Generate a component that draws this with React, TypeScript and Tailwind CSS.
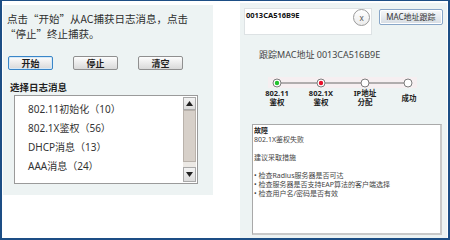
import React from "react";

function Btn({ children, focused }: { children: React.ReactNode; focused?: boolean }) {
  return (
    <div
      className={
        "w-[45px] h-[14px] rounded-[2px] border bg-linear-to-b from-[#fdfdfd] to-[#d9d9d9] flex items-center justify-center text-[9px] leading-none font-bold text-[#1e1e1e] " +
        (focused ? "border-[#3a86c8] shadow-[inset_0_0_0_1px_#d7e9f7]" : "border-[#8f8f8f]")
      }
    >
      {children}
    </div>
  );
}

function Arrow({ up }: { up?: boolean }) {
  return (
    <div className="h-full w-full bg-linear-to-b from-[#f3f3f3] to-[#dcdcdc] border border-[#a9a9a9] flex items-center justify-center">
      <svg width="7" height="5" viewBox="0 0 7 5">
        {up ? <polygon points="0,5 7,5 3.5,0" fill="#222" /> : <polygon points="0,0 7,0 3.5,5" fill="#222" />}
      </svg>
    </div>
  );
}

export default function App() {
  const items = ["802.11初始化（10）", "802.1X鉴权（56）", "DHCP消息（13）", "AAA消息（24）"];
  const labels: string[][] = [["802.11", "鉴权"], ["802.1X", "鉴权"], ["IP地址", "分配"], ["成功"]];
  return (
    <div className="w-[450px] h-[240px] bg-white border-t border-l-2 border-r-2 border-b-2 border-[#1d4e85] flex font-['Noto_Sans','Noto_Sans_CJK_SC',sans-serif]">
      {/* Left panel */}
      <div className="ml-[1px] mt-[4px] w-[210px] h-[190px] bg-[#edf3f3] flex flex-col">
        <div className="pl-[4px] pt-[6px] text-[10.5px] leading-[15px] text-[#2e2e2e] font-['Noto_Sans_CJK_SC',sans-serif]">
          <div className="whitespace-nowrap">点击“开始”从AC捕获日志消息，点击</div>
          <div className="whitespace-nowrap -ml-[2px]">“停止”终止捕获。</div>
        </div>
        <div className="flex pl-[5px] mt-[15px] gap-[20px]">
          <Btn focused>开始</Btn>
          <Btn>停止</Btn>
          <Btn>清空</Btn>
        </div>
        <div className="mt-[12px] pl-[7px] text-[9.5px] leading-[12px] font-bold text-[#222]">选择日志消息</div>
        <div className="ml-[11px] mt-[1px] w-[184px] h-[89px] border border-[#9a9a9a] bg-white flex">
          <div className="flex-1 pl-[13px] pt-[4px] text-[10px] leading-[19px] text-[#333]">
            {items.map((t) => (
              <div key={t} className="whitespace-nowrap">{t}</div>
            ))}
          </div>
          <div className="w-[13px] flex flex-col py-[1px] mr-[1px]">
            <div className="h-[13px]"><Arrow up /></div>
            <div className="h-[52px] bg-[#d7d0c9] border border-[#b9b2ab]" />
            <div className="flex-1 bg-[#ece9e5]" />
            <div className="h-[15px]"><Arrow /></div>
          </div>
        </div>
      </div>

      {/* Right panel */}
      <div className="ml-[27px] mt-[2px] w-[207px] h-[235px] bg-[#edf3f3] flex flex-col">
        <div className="flex items-start pt-[5px] pl-[4px]">
          <div className="w-[128px] h-[27px] bg-white border border-[#dde2e4] flex items-start">
            <div className="flex-1 pl-[1px] pt-[2px] text-[7.5px] leading-[9px] font-bold text-[#111]">0013CA516B9E</div>
            <div className="mr-[1px] w-[17px] h-[17px] rounded-full border border-[#9a9a9a] bg-linear-to-b from-white to-[#ececec] flex items-center justify-center text-[8px] leading-none text-[#555]">x</div>
          </div>
          <div className="ml-[7px] mt-[1px] w-[64px] h-[16px] rounded-[2px] border border-[#88a6c8] bg-linear-to-b from-[#f7f9fb] to-[#d6dce3] shadow-[inset_0_0_0_1px_#ffffff] flex items-center justify-center text-[8px] leading-none text-[#333]">
            MAC地址跟踪
          </div>
        </div>
        <div className="mt-[14px] pl-[19px] text-[9px] leading-[12px] text-[#444] whitespace-nowrap">跟踪MAC地址 0013CA516B9E</div>
        <div className="mt-[16px] ml-[28px] w-[149px] h-[11px] bg-[#f6eff1]">
          <svg width="149" height="11" viewBox="0 0 149 11">
            <line x1="9" y1="6" x2="140" y2="6" stroke="#6b6b6b" strokeWidth="1" />
            {[9, 53, 97, 140].map((cx, i) => (
              <g key={cx}>
                <circle cx={cx} cy="6" r="4" fill="#fff" stroke="#7d7d7d" strokeWidth="1" />
                {i === 0 && <circle cx={cx} cy="6" r="2.2" fill="#22c22e" />}
                {i === 1 && <circle cx={cx} cy="6" r="2.2" fill="#e8102a" />}
              </g>
            ))}
          </svg>
        </div>
        <div className="mt-[1px] ml-[15px] grid grid-cols-[44px_44px_44px_44px] text-[7.5px] leading-[9px] font-bold text-[#222]">
          {labels.map((l, i) => (
            <div key={i} className={"flex flex-col items-center " + (l.length === 1 ? "justify-center" : "")}>
              {l.map((s) => (
                <div key={s} className="whitespace-nowrap">{s}</div>
              ))}
            </div>
          ))}
        </div>
        <div className="mt-auto mb-[3px] ml-[12px] w-[190px] h-[111px] bg-white border border-[#a9a9a9] border-r-2 border-b-2 border-r-[#c9c9c9] border-b-[#c9c9c9] pl-[1px] pt-[1px] text-[7px] leading-[9px] text-[#444]">
          <div className="font-bold text-[#222]">故障</div>
          <div>802.1X鉴权失败</div>
          <div className="h-[9px]" />
          <div>建议采取措施</div>
          <div className="h-[9px]" />
          <div className="whitespace-nowrap">• 检查Radius服务器是否可达</div>
          <div className="whitespace-nowrap">• 检查服务器是否支持EAP算法的客户端选择</div>
          <div className="whitespace-nowrap">• 检查用户名/密码是否有效</div>
        </div>
      </div>
    </div>
  );
}
